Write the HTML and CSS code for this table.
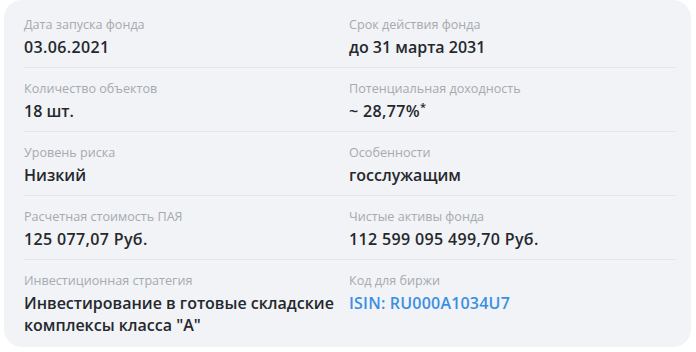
FILE: index.html
```html
<!DOCTYPE html>
<html lang="ru">
<head>
<meta charset="utf-8">
<link rel="stylesheet" href="styles.css">
</head>
<body>
<div class="card">
  <div class="row">
    <div class="cell"><div class="label">Дата запуска фонда</div><div class="value num">03.06.2021</div></div>
    <div class="cell"><div class="label">Срок действия фонда</div><div class="value">до 31 марта 2031</div></div>
  </div>
  <div class="row">
    <div class="cell"><div class="label">Количество объектов</div><div class="value">18 шт.</div></div>
    <div class="cell"><div class="label">Потенциальная доходность</div><div class="value num">~ 28,77%<sup class="star">*</sup></div></div>
  </div>
  <div class="row">
    <div class="cell"><div class="label">Уровень риска</div><div class="value">Низкий</div></div>
    <div class="cell"><div class="label">Особенности</div><div class="value">госслужащим</div></div>
  </div>
  <div class="row">
    <div class="cell"><div class="label">Расчетная стоимость ПАЯ</div><div class="value num">125 077,07 Руб.</div></div>
    <div class="cell"><div class="label">Чистые активы фонда</div><div class="value num">112 599 095 499,70 Руб.</div></div>
  </div>
  <div class="row last">
    <div class="cell"><div class="label">Инвестиционная стратегия</div><div class="value">Инвестирование в готовые складские комплексы класса "А"</div></div>
    <div class="cell"><div class="label">Код для биржи</div><div class="value link">ISIN: RU000A1034U7</div></div>
  </div>
</div>
</body>
</html>
```
FILE: styles.css
```css
html, body {
  margin: 0;
  padding: 0;
  background: #ffffff;
}
body {
  font-family: "Open Sans", "Noto Sans", sans-serif;
  width: 696px;
  height: 352px;
  overflow: hidden;
}
.card {
  margin: 0 5px 0 4px;
  background: #f1f3f6;
  border-radius: 18px;
  padding: 12px 15px 18px 20px;
  height: 347px;
  box-sizing: border-box;
}
.row {
  display: grid;
  grid-template-columns: 325px 1fr;
  border-bottom: 1px solid #e3e6eb;
  padding: 4px 0 9px;
}
.row + .row {
  padding-top: 12px;
}
.row.last {
  border-bottom: none;
}
.label {
  font-size: 12.6px;
  line-height: 18px;
  color: #a6aab1;
}
.value {
  font-size: 16px;
  line-height: 22px;
  font-weight: 600;
  color: #25282d;
  margin-top: 2px;
}
.num {
  letter-spacing: 0.35px;
}
.cell:first-child .value {
  padding-right: 4px;
}
.star {
  font-size: 11px;
  line-height: 0;
  vertical-align: 6px;
}
.link {
  color: #3b8fe3;
  letter-spacing: 0.2px;
}
```
